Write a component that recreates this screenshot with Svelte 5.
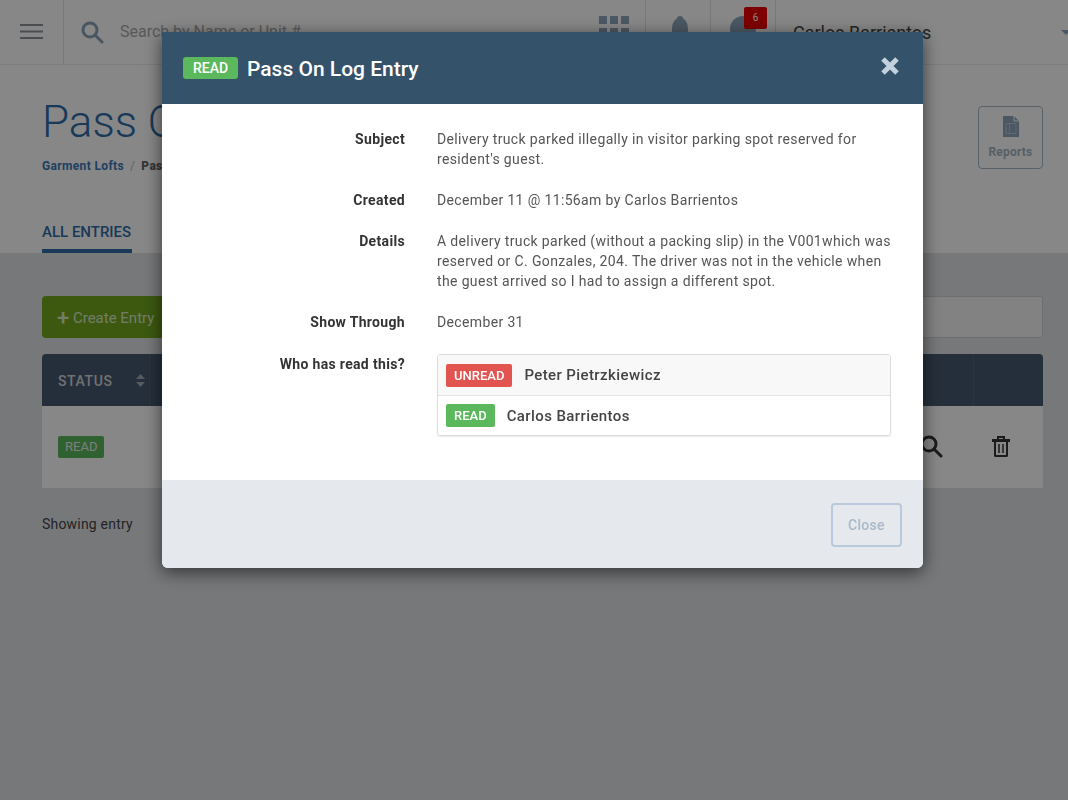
<script>
	const details = [
		{
			label: 'Subject',
			text: "Delivery truck parked illegally in visitor parking spot reserved for resident's guest."
		},
		{ label: 'Created', text: 'December 11 @ 11:56am by Carlos Barrientos' },
		{
			label: 'Details',
			text: 'A delivery truck parked (without a packing slip) in the V001which was reserved or C. Gonzales, 204. The driver was not in the vehicle when the guest arrived so I had to assign a different spot.'
		},
		{ label: 'Show Through', text: 'December 31' }
	];
</script>

<div class="page">
	<header class="topbar">
		<div class="cell menu">
			<svg width="23" height="15" viewBox="0 0 23 15"><path d="M0 1h23M0 7.500h23M0 14h23" stroke="#8f9498" stroke-width="2" /></svg>
		</div>
		<div class="search">
			<svg width="24" height="24" viewBox="0 0 24 24" fill="none" stroke="#8aa3b8" stroke-width="3">
				<circle cx="10" cy="10" r="7" />
				<path d="M15 15l7 7" stroke-linecap="round" />
			</svg>
			<span>Search by Name or Unit #</span>
		</div>
		<div class="cell icon">
			<svg class="grid" width="31" height="32" viewBox="0 0 31 32" fill="#8ea7be">
				<rect x="0" y="0" width="8" height="8" /><rect x="11" y="0" width="8" height="8" /><rect x="22" y="0" width="8" height="8" />
				<rect x="0" y="12" width="8" height="8" /><rect x="11" y="12" width="8" height="8" /><rect x="22" y="12" width="8" height="8" />
			</svg>
		</div>
		<div class="cell icon">
			<svg class="bell" width="24" height="32" viewBox="0 0 24 32" fill="#8ea7be"><path d="M12 0c2 0 3 1 3.500 3C19 5 20 9 20 14v6l4 5H0l4-5v-6c0-5 1-9 4.500-11C9 1 10 0 12 0z" /></svg>
		</div>
		<div class="cell icon">
			<svg width="26" height="32" viewBox="0 0 26 32" fill="#8ea7be"><circle cx="13" cy="13" r="13" /></svg>
			<span class="count">6</span>
		</div>
		<div class="user">
			<span>Carlos Barrientos</span>
			<i class="caret"></i>
		</div>
	</header>

	<section class="intro">
		<div>
			<h1>Pass On Log</h1>
			<nav class="crumbs"><a href="#top">Garment Lofts</a><em>/</em><b>Pass On Log</b></nav>
		</div>
		<div class="reports">
			<svg width="16" height="21" viewBox="0 0 16 21">
				<path d="M0 0h11l5 5v16H0z" fill="#8ea7be" />
				<path d="M11 0v5h5" fill="none" stroke="#fff" stroke-width="1" />
				<path d="M3 7.500h10v10H3zM6.500 7.500v10" fill="none" stroke="#b4c4d2" stroke-width="1" />
			</svg>
			<span>Reports</span>
		</div>
	</section>

	<div class="tabs"><span class="tab">ALL ENTRIES</span></div>

	<main class="content">
		<div class="tools">
			<button class="create"><span class="plus">+</span> Create Entry</button>
			<div class="filter"></div>
		</div>
		<div class="table">
			<div class="thead">
				<div class="th status">
					STATUS
					<svg width="9" height="13" viewBox="0 0 9 13" fill="#a5abb2"><path d="M4.500 0L9 5H0zM4.500 13L0 8h9z" /></svg>
				</div>
				<div class="th"></div>
				<div class="th"></div>
			</div>
			<div class="trow">
				<div class="status"><span class="pill dim">READ</span></div>
				<div></div>
				<div class="act">
					<svg width="24" height="24" viewBox="0 0 24 24" fill="none" stroke="#333" stroke-width="3">
						<circle cx="10" cy="10" r="7" />
						<path d="M15 15l7 7" stroke-linecap="round" />
					</svg>
				</div>
				<div class="act trash">
					<svg width="18" height="21" viewBox="0 0 18 21" fill="none" stroke="#333">
						<path d="M0 4.500h18" stroke-width="3" />
						<path d="M6 4V1h6v3" stroke-width="2" />
						<path d="M3 5v14.500a.5.5 0 0 0 .5.5h11a.5.5 0 0 0 .5-.5V5" stroke-width="2" />
						<path d="M7 8v9M11 8v9" stroke-width="1.500" />
					</svg>
				</div>
			</div>
		</div>
		<p class="showing">Showing entry</p>
	</main>
</div>

<div class="backdrop"></div>

<div class="modal">
	<div class="modal-head">
		<span class="pill title-pill">READ</span>
		<h2>Pass On Log Entry</h2>
		<svg class="close-x" width="20" height="20" viewBox="0 0 20 20"><path d="M3 3l14 14M17 3L3 17" stroke="#c3d0de" stroke-width="5" /></svg>
	</div>
	<div class="modal-body">
		{#each details as row}
			<div class="label">{row.label}</div>
			<div class="value">{row.text}</div>
		{/each}
		<div class="label who">Who has read this?</div>
		<ul class="readers">
			<li class="odd"><span class="pill unread">UNREAD</span>Peter Pietrzkiewicz</li>
			<li><span class="pill">READ</span>Carlos Barrientos</li>
		</ul>
	</div>
	<div class="modal-foot">
		<button class="close">Close</button>
	</div>
</div>

<style>
	:global(body) {
		font-family: Roboto, 'Liberation Sans', sans-serif;
		background: #e0e2e6;
	}

	.page {
		height: 800px;
		overflow: hidden;
		display: flex;
		flex-direction: column;
		background: #e0e2e6;
	}

	.topbar {
		display: flex;
		height: 65px;
		flex: none;
		background: #fff;
		border-bottom: 1px solid #ececec;
		box-sizing: border-box;
		overflow: hidden;
	}

	.cell {
		display: flex;
		justify-content: center;
		align-items: flex-start;
		position: relative;
		border-right: 1px solid #e2e2e2;
		box-sizing: border-box;
	}

	.menu {
		width: 64px;
		align-items: center;
		padding-bottom: 1px;
	}

	.search {
		flex: 1;
		display: flex;
		align-items: center;
		gap: 16px;
		padding: 0 0 1px 16px;
		color: #a8a8a8;
		font-size: 16px;
	}

	.icon {
		width: 65px;
		padding-top: 16px;
	}

	.grid {
		margin-left: 2px;
	}

	.bell {
		margin-left: 4px;
	}

	.count {
		position: absolute;
		left: 33px;
		top: 7px;
		width: 23px;
		height: 22px;
		background: #ee0000;
		border-radius: 2px;
		color: #fff;
		font-size: 10px;
		text-align: center;
		line-height: 22px;
	}

	.user {
		width: 292px;
		display: flex;
		align-items: center;
		justify-content: space-between;
		padding-left: 17px;
		color: #444;
		font-size: 18px;
		box-sizing: border-box;
	}

	.caret {
		width: 0;
		height: 0;
		border: 5px solid transparent;
		border-top-color: #8ea7be;
		border-bottom: 0;
		margin-left: auto;
		transform: translateX(3px);
	}

	.intro {
		background: #fff;
		height: 129px;
		flex: none;
		display: flex;
		justify-content: space-between;
		padding: 0 25px 0 42px;
	}

	h1 {
		margin: 31px 0 0;
		font-size: 44px;
		font-weight: 300;
		line-height: 52px;
		color: #2f6ca6;
	}

	.crumbs {
		margin-top: 10px;
		font-size: 12px;
		font-weight: 700;
		line-height: 16px;
		letter-spacing: 0.35px;
		color: #666;
	}

	.crumbs a {
		color: #3a78b5;
		text-decoration: none;
	}

	.crumbs em {
		margin: 0 6px;
		font-style: normal;
		font-weight: 400;
		color: #bbb;
	}

	.reports {
		margin-top: 41px;
		width: 65px;
		height: 63px;
		box-sizing: border-box;
		border: 1px solid #a9b8c6;
		border-radius: 4px;
		display: flex;
		flex-direction: column;
		align-items: center;
		padding-top: 9px;
		gap: 8px;
		font-size: 12px;
		font-weight: 700;
		letter-spacing: 0.2px;
		color: #a5b3c0;
	}

	.tabs {
		background: #fff;
		height: 59px;
		flex: none;
		padding-left: 42px;
		box-sizing: border-box;
		display: flex;
		align-items: flex-end;
	}

	.tab {
		height: 30px;
		box-sizing: border-box;
		border-bottom: 4px solid #2f6ca6;
		font-size: 15px;
		font-weight: 500;
		color: #2f6ca6;
		line-height: 18px;
		width: 90px;
		white-space: nowrap;
	}

	.content {
		flex: 1;
		padding: 43px 25px 0 42px;
	}

	.tools {
		display: flex;
		justify-content: space-between;
	}

	.create {
		width: 200px;
		height: 42px;
		border: 0;
		border-radius: 4px;
		background: #72a81d;
		color: #dde9cc;
		font: 15px Roboto, sans-serif;
		text-align: left;
		padding: 0 0 0 15px;
	}

	.plus {
		font-size: 22px;
		font-weight: 500;
		vertical-align: -2px;
	}

	.filter {
		width: 400px;
		height: 42px;
		box-sizing: border-box;
		background: #f6f6f6;
		border: 1px solid #d0d0d0;
		border-radius: 2px;
	}

	.table {
		margin-top: 16px;
	}

	.thead {
		display: grid;
		grid-template-columns: 108px 1fr 69px;
		height: 52px;
		background: #465a70;
		border-radius: 4px 4px 0 0;
	}

	.th {
		border-right: 1px solid #53677d;
		color: #d5d5d5;
		font-size: 14px;
		font-weight: 500;
		display: flex;
		align-items: center;
		padding-top: 1px;
		box-sizing: border-box;
		letter-spacing: 0.6px;
	}

	.th:last-child {
		border-right: 0;
	}

	.th.status {
		justify-content: space-between;
		padding: 1px 4px 0 16px;
	}

	.trow {
		display: grid;
		grid-template-columns: 108px 1fr 86px 69px;
		height: 82px;
		background: #fff;
		align-items: center;
	}

	.status {
		padding-left: 16px;
	}

	.act {
		display: flex;
		justify-content: center;
		margin-bottom: 3px;
	}

	.act:first-of-type {
		padding-right: 2px;
	}

	.trash {
		padding-right: 16px;
		margin-bottom: 1px;
	}

	.showing {
		margin: 27px 0 0;
		font-size: 14px;
		line-height: 18px;
		letter-spacing: 0.2px;
		color: #444;
	}

	.backdrop {
		position: fixed;
		inset: 0;
		background: rgba(0, 0, 0, 0.47);
	}

	.modal {
		position: fixed;
		left: 162px;
		top: 32px;
		width: 761px;
		height: 536px;
		display: flex;
		flex-direction: column;
		background: #fff;
		border-radius: 0 0 6px 6px;
		box-shadow: 0 4px 18px rgba(0, 0, 0, 0.6);
		overflow: hidden;
	}

	.modal-head {
		height: 72px;
		flex: none;
		display: flex;
		align-items: center;
		gap: 9px;
		padding: 0 23px 0 21px;
		background: #34526a;
		box-sizing: border-box;
	}

	h2 {
		margin: 2px 0 0;
		flex: 1;
		font-size: 21px;
		font-weight: 500;
		color: #fff;
		letter-spacing: 0;
	}

	.close-x {
		margin-bottom: 5px;
	}

	.pill {
		display: inline-block;
		height: 23px;
		line-height: 24px;
		padding: 0 8px;
		background: #5cb85c;
		color: #fff;
		border-radius: 2px;
		font-size: 13px;
		font-weight: 500;
		letter-spacing: 0;
		box-sizing: border-box;
	}

	.title-pill {
		height: 22px;
		line-height: 22px;
		width: 55px;
		padding: 0;
		text-align: center;
		font-size: 14px;
		border-radius: 3px;
	}

	.dim {
		font-weight: 400;
		color: #eee;
		height: 22px;
		line-height: 22px;
		padding: 0 7px;
	}

	.unread {
		background: #e25450;
	}

	.modal-body {
		flex: 1;
		display: grid;
		grid-template-columns: 243px 454px;
		column-gap: 32px;
		row-gap: 21px;
		align-content: start;
		padding-top: 25px;
		font-size: 14px;
		line-height: 20px;
		letter-spacing: 0.36px;
	}

	.label {
		text-align: right;
		font-weight: 700;
		color: #333;
		letter-spacing: 0.33px;
	}

	.who {
		padding-top: 1px;
	}

	.value {
		color: #555;
	}

	.readers {
		margin: 1px 0 0;
		padding: 0;
		list-style: none;
		border: 1px solid #dcdcdc;
		border-radius: 3px;
		box-shadow: 0 1px 1px rgba(0, 0, 0, 0.08);
	}

	.readers li {
		height: 39px;
		box-sizing: border-box;
		display: flex;
		align-items: center;
		gap: 12px;
		padding-left: 8px;
		font-size: 15px;
		font-weight: 500;
		letter-spacing: 0.4px;
		color: #444;
	}

	.readers li.odd {
		height: 41px;
		background: #f8f8f8;
		border-bottom: 1px solid #e4e4e4;
	}

	.modal-foot {
		height: 88px;
		flex: none;
		display: flex;
		justify-content: flex-end;
		align-items: center;
		padding: 2px 21px 0 0;
		box-sizing: border-box;
		background: #e5e8ed;
	}

	.close {
		width: 71px;
		height: 44px;
		background: transparent;
		border: 2px solid #b7c9da;
		border-radius: 4px;
		color: #a9b9c9;
		font: 500 14px Roboto, sans-serif;
		letter-spacing: 0.3px;
	}
</style>
